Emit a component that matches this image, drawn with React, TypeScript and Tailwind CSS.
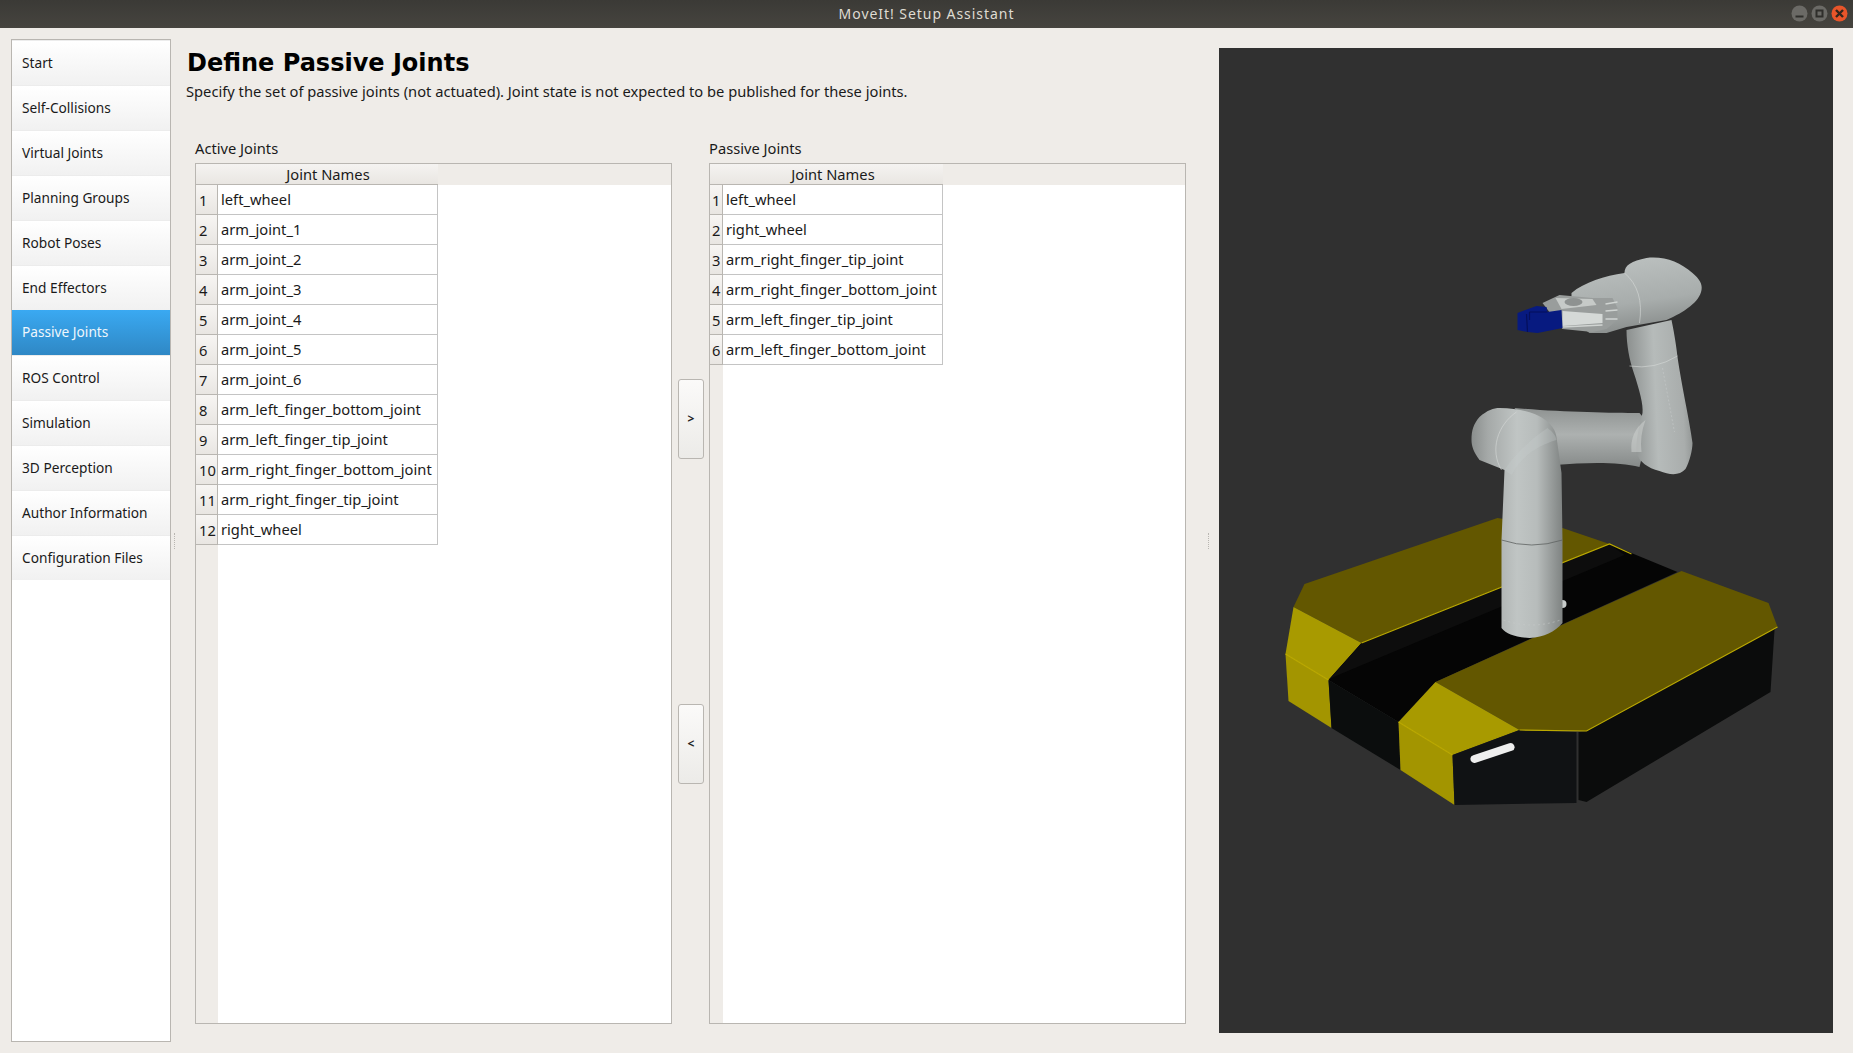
const navItems = [
  "Start",
  "Self-Collisions",
  "Virtual Joints",
  "Planning Groups",
  "Robot Poses",
  "End Effectors",
  "Passive Joints",
  "ROS Control",
  "Simulation",
  "3D Perception",
  "Author Information",
  "Configuration Files",
];

const activeJoints = [
  "left_wheel",
  "arm_joint_1",
  "arm_joint_2",
  "arm_joint_3",
  "arm_joint_4",
  "arm_joint_5",
  "arm_joint_6",
  "arm_left_finger_bottom_joint",
  "arm_left_finger_tip_joint",
  "arm_right_finger_bottom_joint",
  "arm_right_finger_tip_joint",
  "right_wheel",
];

const passiveJoints = [
  "left_wheel",
  "right_wheel",
  "arm_right_finger_tip_joint",
  "arm_right_finger_bottom_joint",
  "arm_left_finger_tip_joint",
  "arm_left_finger_bottom_joint",
];

function WindowButtons() {
  return (
    <div className="absolute right-[5px] top-[5px] flex gap-[3px]">
      <svg width="17" height="17" viewBox="0 0 17 17">
        <circle cx="8.5" cy="8.5" r="8" fill="#6b6a66" />
        <rect x="4.5" y="10.5" width="8" height="2" fill="#2f2e2b" />
      </svg>
      <svg width="17" height="17" viewBox="0 0 17 17">
        <circle cx="8.5" cy="8.5" r="8" fill="#6b6a66" />
        <rect x="5.5" y="5.5" width="6" height="6" fill="none" stroke="#2f2e2b" strokeWidth="2" />
      </svg>
      <svg width="17" height="17" viewBox="0 0 17 17">
        <circle cx="8.5" cy="8.5" r="8" fill="#e8552a" />
        <path d="M5 5 L12 12 M12 5 L5 12" stroke="#33261c" strokeWidth="2.4" />
      </svg>
    </div>
  );
}

function JointTable({
  joints,
  headWidth,
  numPad,
}: {
  joints: string[];
  headWidth: string;
  numPad: string;
}) {
  return (
    <div className="h-full border border-[#b9b6b1] bg-white flex flex-col overflow-hidden text-[14.7px]">
      <div className="h-[21px] shrink-0 bg-[#efece8] flex">
        <div className={`${headWidth} shrink-0 bg-gradient-to-b from-[#f5f3f1] to-[#e9e6e2] border-b border-[#b9b6b1]`} />
        <div className="w-[220px] shrink-0 bg-gradient-to-b from-[#f5f3f1] to-[#e9e6e2] border-b border-[#b9b6b1] text-center leading-[20px] text-[#1a1a1a]">
          Joint Names
        </div>
      </div>
      <div className="flex-1 flex">
        <div className={`${headWidth} shrink-0 bg-[#efece8] flex flex-col`}>
          {joints.map((_, i) => (
            <div
              key={i}
              className={`${numPad} h-[30px] shrink-0 bg-gradient-to-b from-[#f7f5f3] to-[#e9e6e2] border-b border-r border-[#b9b6b1] flex items-center pt-[2px] text-[#1a1a1a]`}
            >
              {i + 1}
            </div>
          ))}
        </div>
        <div className="w-[220px] shrink-0 flex flex-col">
          {joints.map((joint) => (
            <div
              key={joint}
              className="h-[30px] shrink-0 border-b border-r border-[#c4c4c4] pl-[3px] leading-[28px] text-[#1a1a1a] whitespace-nowrap"
            >
              {joint}
            </div>
          ))}
        </div>
      </div>
    </div>
  );
}

function MoveButton({ label }: { label: string }) {
  return (
    <button className="w-[26px] h-[80px] rounded-[3px] border border-[#b9b6b1] bg-gradient-to-b from-[#fbfaf9] to-[#ecebe8] text-[12px] font-bold text-[#222]">
      {label}
    </button>
  );
}

function RobotView() {
  return (
    <svg className="block w-full h-full" viewBox="1220 48 613 985">
      <defs>
        <linearGradient id="metalV" x1="0" x2="1" y1="0" y2="0">
          <stop offset="0" stopColor="#8a8e8d" />
          <stop offset="0.18" stopColor="#a5a9a8" />
          <stop offset="0.5" stopColor="#c0c5c4" />
          <stop offset="0.72" stopColor="#b7bcbb" />
          <stop offset="1" stopColor="#7f8382" />
        </linearGradient>
        <linearGradient id="metalH" x1="0" x2="0" y1="0" y2="1">
          <stop offset="0" stopColor="#8f9392" />
          <stop offset="0.45" stopColor="#adb1b0" />
          <stop offset="1" stopColor="#868a89" />
        </linearGradient>
        <linearGradient id="metalE" x1="0" x2="1" y1="0.1" y2="0">
          <stop offset="0" stopColor="#8c908f" />
          <stop offset="0.4" stopColor="#b6bbba" />
          <stop offset="0.8" stopColor="#a9adac" />
          <stop offset="1" stopColor="#878b8a" />
        </linearGradient>
        <linearGradient id="metalT" x1="0.3" x2="0.55" y1="0" y2="1">
          <stop offset="0" stopColor="#bcc1c0" />
          <stop offset="0.6" stopColor="#a8adac" />
          <stop offset="1" stopColor="#868a89" />
        </linearGradient>
      </defs>

      {/* base */}
      <polygon points="1305,584 1498,518 1563,528 1610,544 1362,643 1294,607" fill="#635700" />
      <polygon points="1294,607 1362,643 1329,680 1286,654" fill="#a89a00" />
      <polygon points="1286,654 1329,680 1332,728 1289,701" fill="#a39500" />
      <polygon points="1362,643 1610,544 1678,572 1436,682 1399,722 1329,680" fill="#050505" />
      <polygon points="1362,643 1610,544 1625,555 1334,677 1329,680" fill="#0d0d0d" />
      <polygon points="1329,680 1399,722 1401,770 1332,728" fill="#0b0d0d" />
      <polygon points="1436,682 1682,571 1769,603 1778,627 1587,731 1520,730" fill="#635700" />
      <polygon points="1436,682 1520,730 1453,755 1399,722" fill="#a89a00" />
      <polygon points="1399,722 1453,755 1455,805 1401,770" fill="#a39500" />
      <polygon points="1453,755 1520,730 1577,732 1577,803 1455,805" fill="#101214" />
      <polygon points="1579,732 1587,731 1778,627 1775,630 1771,692 1587,802 1579,800" fill="#0b0c0c" />
      <path d="M1362,643 L1610,544 L1632,554 M1520,730 L1587,731 L1778,627 M1286,654 L1329,680 M1399,722 L1453,755" stroke="#bcaa00" strokeWidth="1.2" fill="none" />
      <path d="M1475,759 L1511,747" stroke="#eeeeee" strokeWidth="8" strokeLinecap="round" />
      <circle cx="1563" cy="604" r="4" fill="#c8cccb" />

      {/* horizontal link */}
      <path d="M1515,408 C1560,412 1610,413 1640,413 L1650,425 L1640,467 C1620,462 1590,462 1555,465 Z" fill="url(#metalH)" />
      {/* elbow link */}
      <path d="M1627,330 C1627,345 1630,360 1634,372 C1640,390 1644,405 1643,413 C1640,425 1636,440 1637,453 C1640,462 1648,468 1660,471 C1670,475 1680,476 1686,469 C1690,462 1693,450 1693,443 C1690,420 1682,385 1678,357 C1676,340 1674,330 1672,320 Z" fill="url(#metalE)" />
      <path d="M1630,366 Q1655,370 1678,356" stroke="#d6dad9" strokeWidth="0.6" fill="none" />
      <path d="M1632,452 Q1630,432 1646,420 Q1640,436 1642,452 Z" fill="#c9cdcc" opacity="0.6" />
      <path d="M1663,368 L1675,432" stroke="#c6cac9" strokeWidth="0.6" strokeDasharray="2 2" fill="none" />
      {/* wrist link */}
      <path d="M1572,293 C1585,282 1605,276 1625,273 C1625,265 1632,261 1647,258 C1665,256 1680,262 1693,273 C1700,279 1703,284 1702,290 C1700,302 1685,312 1667,320 L1627,327 L1607,333 L1590,333 L1572,320 Z" fill="url(#metalT)" />
      <path d="M1625,273 Q1645,290 1640,323" stroke="#d6dad9" strokeWidth="0.6" fill="none" />
      {/* gripper */}
      <path d="M1543,303 L1560,295 L1593,298 L1613,298 L1618,308 L1618,320 L1607,329 L1593,332 L1563,329 Z" fill="#999d9c" />
      <path d="M1556,298 L1593,299 L1597,305 L1562,309 Z" fill="#c6cac8" />
      <ellipse cx="1574" cy="302" rx="9" ry="4" fill="#8e9291" />
      <path d="M1563,311 L1603,314 L1603,323 L1563,326 Z" fill="#d5d9d7" />
      <path d="M1563,327 L1603,325 M1606,304 L1618,302 M1606,311 L1618,310 M1606,319 L1618,319" stroke="#d0d4d2" strokeWidth="1.5" fill="none" />
      <path d="M1518,313 L1537,306 L1547,307 L1548,312 L1562,310 L1563,328 L1538,333 L1528,332 L1518,330 Z" fill="#071a80" />
      <path d="M1527,314 L1528,332 M1530,312 L1548,312 M1530,312 L1530,320" stroke="#050f5a" strokeWidth="1.2" fill="none" />
      {/* shoulder + column */}
      <path d="M1502,628 L1502,540 L1505,470 L1480,460 C1474,452 1472,446 1472,440 C1472,430 1474,424 1480,417 C1488,410 1494,408 1500,408 C1520,408 1535,413 1543,418 C1552,424 1556,430 1557,437 L1562,473 L1563,540 L1563,623 C1555,632 1545,637 1530,638 C1515,637 1507,634 1502,628 Z" fill="url(#metalV)" />
      <path d="M1505,470 C1515,455 1530,440 1548,428 C1553,432 1556,435 1557,440 C1540,445 1522,455 1512,475 Z" fill="#c8cdcc" opacity="0.3" />
      <path d="M1502,540 Q1532,550 1563,540" stroke="#5e6261" strokeWidth="0.8" fill="none" />
      <path d="M1517,412 C1498,425 1490,450 1502,470" stroke="#d6dad9" strokeWidth="0.6" fill="none" />
      <path d="M1504,620 Q1532,630 1561,620" stroke="#c6cac9" strokeWidth="0.6" strokeDasharray="2 3" fill="none" />
    </svg>
  );
}

export default function App() {
  return (
    <div
      className="h-screen w-full flex flex-col bg-[#efece8] text-[14.7px] text-[#1a1a1a] overflow-hidden"
      style={{ fontFamily: '"Noto Sans", sans-serif' }}
    >
      {/* title bar */}
      <div className="relative h-[28px] shrink-0 bg-gradient-to-b from-[#3b3a36] to-[#46443f] flex items-center justify-center">
        <span className="text-[#dfdbd2] text-[14px] tracking-[0.95px] pb-px">MoveIt! Setup Assistant</span>
        <WindowButtons />
      </div>

      <div className="flex-1 flex min-h-0">
        {/* sidebar */}
        <div className="ml-[11px] mt-[11px] mb-[11px] w-[160px] shrink-0 border border-[#b9b6b1] bg-white flex flex-col text-[13.7px]">
          {navItems.map((item) =>
            item === "Passive Joints" ? (
              <div
                key={item}
                className="h-[45px] shrink-0 pl-[10px] flex items-center text-[#eef6fc] bg-gradient-to-b from-[#3aa9f2] to-[#2f88c5]"
              >
                {item}
              </div>
            ) : (
              <div
                key={item}
                className="h-[45px] shrink-0 pl-[10px] pt-[1px] flex items-center bg-gradient-to-b from-white to-[#f1f1f1] border-t border-[#ececec]"
              >
                {item}
              </div>
            )
          )}
        </div>

        {/* splitter */}
        <div className="w-[16px] shrink-0 flex items-center pl-[3px]">
          <div className="h-[16px] w-px border-l border-dotted border-[#b9b6b1]" />
        </div>

        {/* main */}
        <div className="w-[999px] shrink-0 flex flex-col">
          <h1
            className="mt-[20px] h-[30px] leading-[30px] text-[24px] font-bold text-black"
            style={{ fontFamily: '"DejaVu Sans", sans-serif' }}
          >
            Define Passive Joints
          </h1>
          <p className="mt-[3px] h-[20px] leading-[20px] text-[#1a1a1a] -ml-px">
            Specify the set of passive joints (not actuated). Joint state is not expected to be published for these joints.
          </p>
          <div className="mt-[37px] ml-[8px] flex-1 mb-[29px] flex min-h-0">
            <div className="w-[477px] shrink-0 flex flex-col">
              <div className="h-[25px] leading-[20px]">Active Joints</div>
              <div className="flex-1 min-h-0">
                <JointTable joints={activeJoints} headWidth="w-[22px]" numPad="pl-[3px]" />
              </div>
            </div>
            <div className="w-[37px] shrink-0 flex flex-col pt-[241px] pl-[6px] gap-[245px]">
              <MoveButton label=">" />
              <MoveButton label="<" />
            </div>
            <div className="w-[477px] shrink-0 flex flex-col">
              <div className="h-[25px] leading-[20px]">Passive Joints</div>
              <div className="flex-1 min-h-0">
                <JointTable joints={passiveJoints} headWidth="w-[13px]" numPad="pl-[2px]" />
              </div>
            </div>
          </div>
        </div>

        {/* splitter */}
        <div className="w-[33px] shrink-0 flex items-center pl-[22px]">
          <div className="h-[16px] w-px border-l border-dotted border-[#b9b6b1]" />
        </div>

        {/* 3d view */}
        <div className="w-[614px] h-[985px] mt-[20px] shrink-0 bg-[#303030]">
          <RobotView />
        </div>
      </div>
    </div>
  );
}
